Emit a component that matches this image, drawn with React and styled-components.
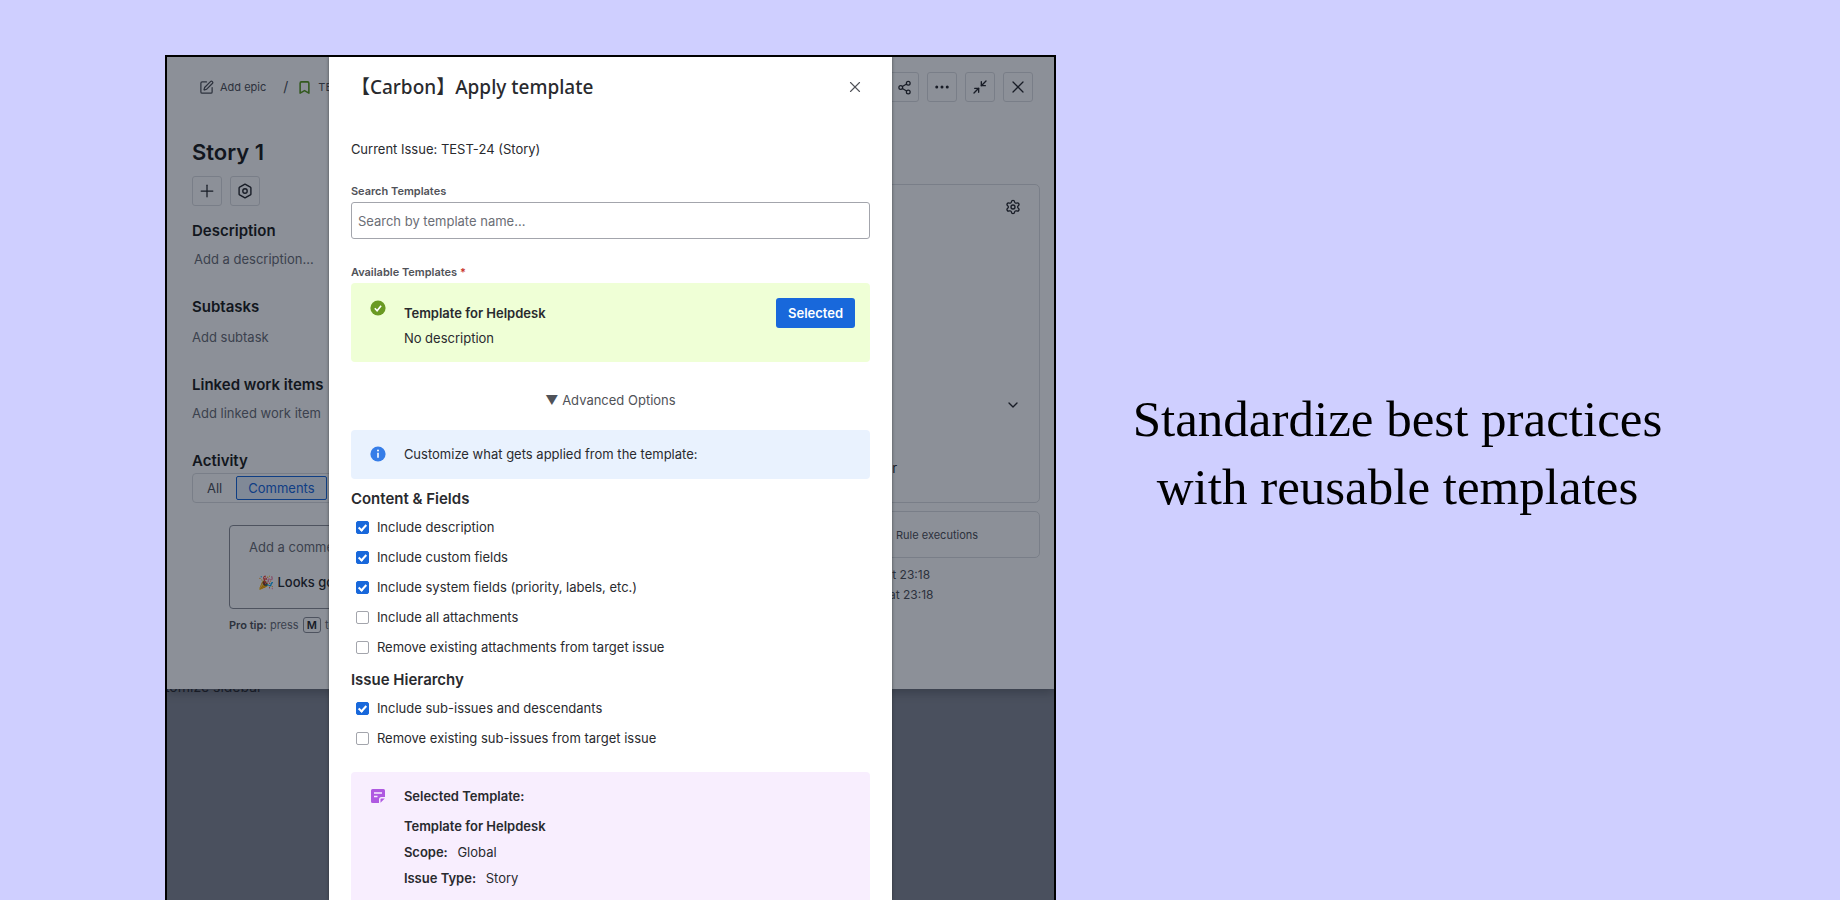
import React from 'react'
import styled, { createGlobalStyle } from 'styled-components'
import { Bookmark, ChevronDown, Ellipsis, Minimize2, Plus, Settings, Share2, SquarePen, X } from 'lucide-react'

const GlobalStyle = createGlobalStyle`
  * {
    box-sizing: border-box;
  }

  body {
    margin: 0;
    background: #cfcfff;
    color: #292a2e;
    font: 13px/20px Inter, "Liberation Sans", sans-serif;
  }

  h1, h2, h3, p {
    margin: 0;
  }

  button, input {
    font: inherit;
  }
`

const Page = styled.div`
  display: grid;
  grid-template-columns: 891fr 555fr;
  column-gap: 64px;
  height: 100vh;
  padding: 55px 165px 0;
  overflow: hidden;
`

const Caption = styled.h2`
  align-self: center;
  padding-bottom: 50px;
  color: #000;
  font: 400 51px/68px "Liberation Serif", serif;
  text-align: center;
  white-space: nowrap;
`

const Frame = styled.div`
  position: relative;
  border: 2px solid #000;
  border-bottom: 0;
  background: #868a94;
  overflow: hidden;
`

/* issue view, behind the blanket */

const Issue = styled.div`
  padding: 15px 14px 54px 25px;
  background: #fff;
  box-shadow: 0 4px 10px rgba(30, 31, 33, .3);
`

const IssueHeader = styled.header`
  display: flex;
  justify-content: space-between;
  padding: 0 7px;
`

const Crumbs = styled.nav`
  display: flex;
  align-items: center;
  color: #505258;
  font-size: 11px;

  a {
    color: inherit;
    text-decoration: none;
  }
`

const Crumb = styled.a`
  display: flex;
  align-items: center;
  gap: 6px;
`

const Slash = styled.span`
  margin: 0 9px 0 17px;
  font-size: 14px;
`

const Tools = styled.div`
  display: flex;
  gap: 8px;
`

const SquareButton = styled.button`
  display: flex;
  align-items: center;
  justify-content: center;
  width: 30px;
  height: 30px;
  padding: 0;
  border: 1px solid #dddee1;
  border-radius: 3px;
  background: transparent;
  color: #292a2e;
`

const IssueBody = styled.div`
  display: grid;
  grid-template-columns: 1fr 330px;
  column-gap: 24px;
  white-space: nowrap;
`

const Main = styled.div`
  min-width: 0;
  padding-top: 36px;
`

const IssueTitle = styled.h1`
  margin-bottom: 10px;
  color: #1e1f21;
  font-size: 22px;
  font-weight: 600;
  line-height: 28px;
`

const Section = styled.section`
  display: flex;
  flex-direction: column;
  gap: ${props => props.$gap}px;
  margin-top: ${props => props.$first ? 15 : 28}px;
`

const SectionTitle = styled.h3`
  color: #1e1f21;
  font-size: 15px;
  font-weight: 600;
  line-height: 20px;
`

const Hint = styled.p`
  padding-left: ${props => props.$inset ? 2 : 0}px;
  color: #6b6e76;
`

const Tabs = styled.div`
  display: flex;
  gap: 2px;
  height: 30px;
  padding: 2px;
  border: 1px solid #dddee1;
  border-radius: 4px;
`

const Tab = styled.button`
  padding: 0 11px;
  border: 1px solid ${props => props.$active ? '#1868db' : 'transparent'};
  border-radius: 2px;
  background: ${props => props.$active ? '#e9f2fe' : 'transparent'};
  color: ${props => props.$active ? '#1868db' : '#505258'};
  line-height: 20px;
`

const CommentBox = styled.div`
  display: flex;
  flex-direction: column;
  gap: 15px;
  margin: 22px 0 6px 37px;
  padding: 11px 19px 16px;
  border: 1px solid #8c8f97;
  border-radius: 4px;
`

const QuickReply = styled.p`
  padding-left: 9px;
  font-weight: 500;
`

const ProTip = styled.p`
  margin-left: 37px;
  color: #6b6e76;
  font-size: 11px;

  strong {
    color: #505258;
    font-weight: 600;
  }

  kbd {
    margin: 0 1px;
    padding: 0 3px;
    border: 1px solid #8c8f97;
    border-radius: 3px;
    color: #292a2e;
    font: 600 11px/16px Inter, sans-serif;
  }
`

const Aside = styled.aside`
  padding-top: 82px;
`

const Panel = styled.div`
  border: 1px solid #dddee1;
  border-radius: 5px;
  color: #292a2e;
`

const DetailsPanel = styled(Panel)`
  display: flex;
  flex-direction: column;
  height: 319px;
  padding-bottom: 14px;
`

const PanelRow = styled.div`
  display: flex;
  align-items: center;
  justify-content: flex-end;
  height: 44px;
  padding-right: 18px;

  & + & {
    margin-top: auto;
  }
`

const Reporter = styled.p`
  margin-top: 31px;
  padding: 0 0 10px 133px;
`

const RulePanel = styled(Panel)`
  display: grid;
  grid-template-columns: 170px 1fr;
  align-items: center;
  height: 47px;
  margin: 8px 0 7px;
  padding: 0 15px;
  color: #505258;
  font-size: 11px;
`

const Meta = styled.p`
  padding-left: 56px;
  color: #505258;
  font-size: 12px;
  line-height: 20px;
`

const SidebarPeek = styled.div`
  display: flex;
  align-items: flex-end;
  height: 8px;
  margin-left: -28px;
  font-size: 14px;
  overflow: hidden;
`

/* modal */

const Blanket = styled.div`
  position: absolute;
  inset: 0;
  display: flex;
  justify-content: center;
  background: rgba(5, 12, 31, .46);
`

const Modal = styled.div`
  width: 63.5%;
  padding: 0 22px;
  background: #fff;
  box-shadow: 0 0 3px rgba(30, 31, 33, .6);
`

const ModalHeader = styled.header`
  display: flex;
  align-items: center;
  justify-content: space-between;
  min-height: 60px;
  margin-bottom: 21px;
`

const ModalTitle = styled.h1`
  font: 500 19px/24px "Noto Sans", "Noto Sans CJK JP", sans-serif;
`

const CloseButton = styled.button`
  display: flex;
  padding: 6px;
  border: 0;
  background: transparent;
  color: #505258;
`

const CurrentIssue = styled.p`
  margin-bottom: 22px;
  line-height: 22px;
`

const Fields = styled.div`
  display: grid;
  gap: 24px;
`

const Field = styled.div`
  display: flex;
  flex-direction: column;
  gap: 2px;
`

const FieldLabel = styled.label`
  color: #505258;
  font-size: 11px;
  font-weight: 600;
  line-height: 18px;

  span {
    color: #c9372c;
  }
`

const TextInput = styled.input`
  width: 100%;
  height: 37px;
  padding: 0 6px;
  border: 1px solid #a3a5ac;
  border-radius: 3px;
  background: #fff;
  color: #292a2e;

  &::placeholder {
    color: #6b6e76;
    opacity: 1;
  }
`

const Banner = styled.div`
  display: grid;
  grid-template-columns: 16px 1fr auto;
  column-gap: 18px;
  padding: ${props => props.$tall ? '15px 15px 14px 19px' : '14px 15px 15px 19px'};
  border-radius: 4px;
  background: ${props => props.$color};

  > svg {
    margin-top: 2px;
  }
`

const TemplateName = styled.strong`
  display: block;
  font-weight: 600;
  line-height: ${props => props.$tall ? 30 : 20}px;
`

const SelectButton = styled.button`
  align-self: start;
  height: 30px;
  padding: 0 12px;
  border: 0;
  border-radius: 3px;
  background: #1868db;
  color: #fff;
  font-weight: 600;
`

const Toggle = styled.button`
  display: block;
  height: 30px;
  margin: 23px auto 15px;
  padding: 0;
  border: 0;
  background: transparent;
  color: #505258;
`

const Options = styled.fieldset`
  display: flex;
  flex-direction: column;
  gap: 4px;
  margin: 10px 0 0;
  padding: 0;
  border: 0;

  legend {
    margin-bottom: 5px;
    padding: 0;
    font-size: 15px;
    font-weight: 600;
  }
`

const Option = styled.label`
  display: flex;
  align-items: center;
  gap: 8px;
  height: 26px;
  padding-left: 5px;
`

const Checkbox = styled.input`
  appearance: none;
  display: flex;
  justify-content: center;
  width: 13px;
  height: 13px;
  margin: 0;
  border: 1px solid #a3a5ac;
  border-radius: 2px;
  background: #fff;

  &:checked {
    border-color: #1868db;
    background: #1868db;
  }

  &:checked::after {
    content: '';
    width: 3px;
    height: 6px;
    margin-top: 1px;
    border: solid #fff;
    border-width: 0 2px 2px 0;
    transform: rotate(42deg);
  }
`

const Summary = styled.div`
  margin-top: 21px;
`

const SummaryList = styled.div`
  display: flex;
  flex-direction: column;
  gap: 6px;
  margin-top: 10px;
  padding-bottom: 20px;

  p strong {
    margin-right: 6px;
    font-weight: 600;
  }
`

const HexIcon = () => (
  <svg width="16" height="16" viewBox="0 0 16 16" fill="none" stroke="currentColor" strokeWidth="1.4" strokeLinejoin="round">
    <path d="M8 1.2l5.4 3a1 1 0 0 1 .5.9v5.8a1 1 0 0 1-.5.9L8 14.8l-5.4-3a1 1 0 0 1-.5-.9V5.1a1 1 0 0 1 .5-.9z" />
    <circle cx="8" cy="8" r="2.2" />
  </svg>
)

const CheckIcon = () => (
  <svg width="16" height="16" viewBox="0 0 16 16" fill="none">
    <circle cx="8" cy="8" r="7.6" fill="#6a9a23" />
    <path d="M4.8 8.3l2.3 2.4 4-5" stroke="#fff" strokeWidth="1.6" />
  </svg>
)

const InfoIcon = () => (
  <svg width="16" height="16" viewBox="0 0 16 16">
    <circle cx="8" cy="8" r="7.6" fill="#357de8" />
    <circle cx="8" cy="4.6" r="1" fill="#fff" />
    <path d="M7.2 6.8h1.6v5H7.2z" fill="#fff" />
  </svg>
)

const NoteIcon = () => (
  <svg width="16" height="16" viewBox="0 0 16 16">
    <path d="M2.5 1h11A1.5 1.5 0 0 1 15 2.5V9h-3.5A2.5 2.5 0 0 0 9 11.5V15H2.5A1.5 1.5 0 0 1 1 13.5v-11A1.5 1.5 0 0 1 2.5 1z" fill="#af59e1" />
    <path d="M10.5 14.8v-3.3a1 1 0 0 1 1-1h3.3z" fill="#af59e1" />
    <path d="M4 5h8M4 8.5h3.5" stroke="#f8eefe" strokeWidth="1.5" />
  </svg>
)

const contentOptions = [
  { label: 'Include description', checked: true },
  { label: 'Include custom fields', checked: true },
  { label: 'Include system fields (priority, labels, etc.)', checked: true },
  { label: 'Include all attachments', checked: false },
  { label: 'Remove existing attachments from target issue', checked: false }
]

const hierarchyOptions = [
  { label: 'Include sub-issues and descendants', checked: true },
  { label: 'Remove existing sub-issues from target issue', checked: false }
]

const OptionGroup = ({ title, options }) => (
  <Options>
    <legend>{title}</legend>
    {
      options.map(option => (
        <Option key={option.label}>
          <Checkbox type="checkbox" defaultChecked={option.checked} />
          {option.label}
        </Option>
      ))
    }
  </Options>
)

const IssueView = () => (
  <Issue>
    <IssueHeader>
      <Crumbs>
        <Crumb href="#epic"><SquarePen size={15} /> Add epic</Crumb>
        <Slash>/</Slash>
        <Crumb href="#issue"><Bookmark size={15} strokeWidth={2.5} color="#5b9a1f" /> TEST-24</Crumb>
      </Crumbs>
      <Tools>
        <SquareButton aria-label="Share"><Share2 size={15} /></SquareButton>
        <SquareButton aria-label="More"><Ellipsis size={18} /></SquareButton>
        <SquareButton aria-label="Collapse"><Minimize2 size={16} /></SquareButton>
        <SquareButton aria-label="Close"><X size={20} strokeWidth={1.5} /></SquareButton>
      </Tools>
    </IssueHeader>
    <IssueBody>
      <Main>
        <IssueTitle>Story 1</IssueTitle>
        <Tools>
          <SquareButton aria-label="Add"><Plus size={20} strokeWidth={1.5} /></SquareButton>
          <SquareButton aria-label="Apps"><HexIcon /></SquareButton>
        </Tools>
        <Section $gap={8} $first>
          <SectionTitle>Description</SectionTitle>
          <Hint $inset>Add a description...</Hint>
        </Section>
        <Section $gap={10}>
          <SectionTitle>Subtasks</SectionTitle>
          <Hint>Add subtask</Hint>
        </Section>
        <Section $gap={8}>
          <SectionTitle>Linked work items</SectionTitle>
          <Hint>Add linked work item</Hint>
        </Section>
        <Section $gap={2}>
          <SectionTitle>Activity</SectionTitle>
          <Tabs>
            <Tab>All</Tab>
            <Tab $active>Comments</Tab>
          </Tabs>
        </Section>
        <CommentBox>
          <Hint>Add a comment…</Hint>
          <QuickReply>🎉 Looks good!</QuickReply>
        </CommentBox>
        <ProTip><strong>Pro tip:</strong> press <kbd>M</kbd> to comment</ProTip>
      </Main>
      <Aside>
        <DetailsPanel>
          <PanelRow><Settings size={16} /></PanelRow>
          <PanelRow><ChevronDown size={16} /></PanelRow>
          <Reporter>Reporter</Reporter>
        </DetailsPanel>
        <RulePanel>
          <span>Automation</span>
          <span>Rule executions</span>
        </RulePanel>
        <Meta>Created 9 hours ago at 23:18</Meta>
        <Meta>Updated 9 hours ago at 23:18</Meta>
      </Aside>
    </IssueBody>
  </Issue>
)

const TemplateModal = () => (
  <Modal role="dialog" aria-labelledby="modal-title">
    <ModalHeader>
      <ModalTitle id="modal-title">【Carbon】Apply template</ModalTitle>
      <CloseButton aria-label="Close"><X size={18} strokeWidth={1.5} /></CloseButton>
    </ModalHeader>
    <CurrentIssue>Current Issue: TEST-24 (Story)</CurrentIssue>
    <Fields>
      <Field>
        <FieldLabel htmlFor="search">Search Templates</FieldLabel>
        <TextInput id="search" placeholder="Search by template name..." />
      </Field>
      <Field>
        <FieldLabel htmlFor="template">Available Templates <span>*</span></FieldLabel>
        <Banner $color="#efffd6" $tall>
          <CheckIcon />
          <div>
            <TemplateName $tall>Template for Helpdesk</TemplateName>
            <p>No description</p>
          </div>
          <SelectButton id="template">Selected</SelectButton>
        </Banner>
      </Field>
    </Fields>
    <Toggle>▼ Advanced Options</Toggle>
    <Banner $color="#e9f2fe">
      <InfoIcon />
      <p>Customize what gets applied from the template:</p>
    </Banner>
    <OptionGroup title="Content & Fields" options={contentOptions} />
    <OptionGroup title="Issue Hierarchy" options={hierarchyOptions} />
    <Summary>
      <Banner $color="#f8eefe">
        <NoteIcon />
        <div>
          <TemplateName>Selected Template:</TemplateName>
          <SummaryList>
            <TemplateName>Template for Helpdesk</TemplateName>
            <p><strong>Scope:</strong> Global</p>
            <p><strong>Issue Type:</strong> Story</p>
          </SummaryList>
        </div>
      </Banner>
    </Summary>
  </Modal>
)

const App = () => (
  <Page>
    <GlobalStyle />
    <Frame>
      <IssueView />
      <SidebarPeek>Customize sidebar</SidebarPeek>
      <Blanket>
        <TemplateModal />
      </Blanket>
    </Frame>
    <Caption>Standardize best practices<br />with reusable templates</Caption>
  </Page>
)

export default App
